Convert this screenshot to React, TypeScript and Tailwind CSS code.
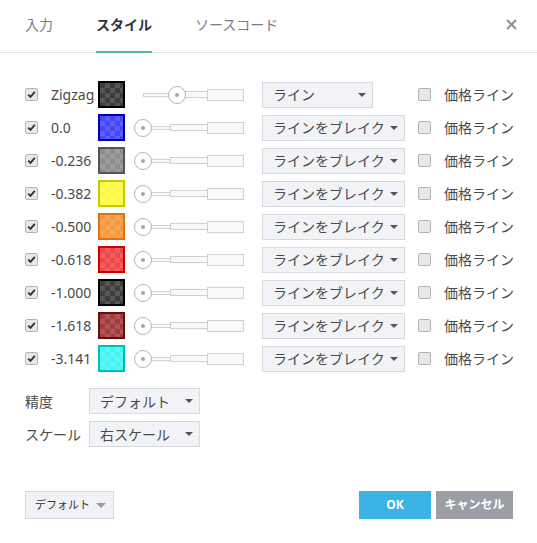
import React from "react";

type Level = {
  label: string;
  fill: string;
  border: string;
  style: string;
  wide: boolean;
  thumb: string;
};

const levels: Level[] = [
  { label: "Zigzag", fill: "bg-[#3c3c3c]", border: "border-[#000000]", style: "ライン", wide: false, thumb: "left-[34px]" },
  { label: "0.0", fill: "bg-[#4646fa]", border: "border-[#0000a8]", style: "ラインをブレイク", wide: true, thumb: "left-0" },
  { label: "-0.236", fill: "bg-[#8e8e8e]", border: "border-[#555555]", style: "ラインをブレイク", wide: true, thumb: "left-0" },
  { label: "-0.382", fill: "bg-[#fafa46]", border: "border-[#c8c800]", style: "ラインをブレイク", wide: true, thumb: "left-0" },
  { label: "-0.500", fill: "bg-[#f8983e]", border: "border-[#e07010]", style: "ラインをブレイク", wide: true, thumb: "left-0" },
  { label: "-0.618", fill: "bg-[#f04646]", border: "border-[#d00000]", style: "ラインをブレイク", wide: true, thumb: "left-0" },
  { label: "-1.000", fill: "bg-[#3e3e3e]", border: "border-[#000000]", style: "ラインをブレイク", wide: true, thumb: "left-0" },
  { label: "-1.618", fill: "bg-[#a03c3c]", border: "border-[#601010]", style: "ラインをブレイク", wide: true, thumb: "left-0" },
  { label: "-3.141", fill: "bg-[#46f4f4]", border: "border-[#00bcbc]", style: "ラインをブレイク", wide: true, thumb: "left-0" },
];

export default function App() {
  return (
    <div className="h-[543px] w-[537px] bg-white font-['Noto_Sans','Noto_Sans_CJK_JP',sans-serif] text-[#4a4a4a]">
      {/* Tabs */}
      <header className="flex h-[53px] items-stretch border-b border-[#e0e3e8] pl-[25px] pr-[20px]">
        <nav className="-mb-px flex gap-[43px]">
          <Tab label="入力" />
          <Tab label="スタイル" active />
          <Tab label="ソースコード" />
        </nav>
        <button className="ml-auto flex items-center text-[#8f939b]">
          <svg width="11" height="11" viewBox="0 0 11 11" className="-mt-[4px]">
            <path d="M1 1 L10 10 M10 1 L1 10" stroke="currentColor" strokeWidth="2" />
          </svg>
        </button>
      </header>

      {/* Levels */}
      <div className="pl-[25px] pt-[25px]">
        {levels.map((l) => (
          <LevelRow key={l.label} level={l} />
        ))}

        <div className="mt-[13px] flex items-center">
          <span className="w-[64px] whitespace-nowrap text-[14px]">精度</span>
          <Select label="デフォルト" className="w-[111px]" />
        </div>
        <div className="mt-[7px] flex items-center">
          <span className="w-[64px] whitespace-nowrap text-[14px]">スケール</span>
          <Select label="右スケール" className="w-[111px]" />
        </div>
      </div>

      {/* Footer */}
      <footer className="mt-[44px] flex items-center justify-between pl-[25px] pr-[24px]">
        <button className="flex h-[28px] w-[89px] items-center justify-between whitespace-nowrap border border-[#d4d7dc] bg-[#f1f2f6] pl-[9px] pr-[7px] text-[11px] text-[#333]">
          デフォルト
          <span className="h-0 w-0 border-x-[5px] border-t-[5px] border-x-transparent border-t-[#9a9a9a]" />
        </button>
        <div className="flex gap-[5px]">
          <button className="h-[28px] w-[72px] bg-[#3bb3e4] text-[12px] font-bold text-white">OK</button>
          <button className="h-[28px] w-[77px] whitespace-nowrap bg-[#9c9ea5] text-[12px] font-bold text-white">キャンセル</button>
        </div>
      </footer>
    </div>
  );
}

function Tab({ label, active }: { label: string; active?: boolean }) {
  return (
    <div
      className={
        active
          ? "flex items-center whitespace-nowrap border-b-2 border-[#53b987] pb-[3px] text-[14px] font-bold text-[#2f3241]"
          : "flex items-center whitespace-nowrap border-b-2 border-transparent pb-[3px] text-[14px] text-[#787b84]"
      }
    >
      {label}
    </div>
  );
}

function Check({ on }: { on?: boolean }) {
  return (
    <span className="flex h-[13px] w-[13px] shrink-0 items-center justify-center rounded-[2px] border border-[#b4b4b4] bg-[#e8e8e8]">
      {on && (
        <svg width="9" height="9" viewBox="0 0 9 9">
          <path d="M1.2 4.6 L3.5 6.9 L7.8 1.8" fill="none" stroke="#333" strokeWidth="1.9" />
        </svg>
      )}
    </span>
  );
}

function Slider({ thumb }: { thumb: string }) {
  return (
    <div className="relative ml-[9px] h-[20px] w-[110px] shrink-0">
      <div className="absolute inset-0 flex items-center pl-[9px]">
        <div className="h-[4px] w-[28px] border border-[#d0d0d0] bg-[#f9f9f9]" />
        <div className="-ml-px h-[7px] w-[38px] border border-[#d0d0d0] bg-[#f9f9f9]" />
        <div className="-ml-px h-[12px] w-[37px] border border-[#d0d0d0] bg-[#f9f9f9]" />
      </div>
      <div className={`absolute top-[1px] ${thumb} flex h-[18px] w-[18px] items-center justify-center rounded-full border border-[#b2b5bc] bg-white`}>
        <div className="h-[4px] w-[4px] rounded-full bg-[#a3a7ae]" />
      </div>
    </div>
  );
}

function Select({ label, className }: { label: string; className: string }) {
  return (
    <div className={`flex h-[26px] items-center justify-between whitespace-nowrap border border-[#d6d9de] bg-[#f1f3f7] pl-[10px] pr-[6px] text-[14px] ${className}`}>
      <span>{label}</span>
      <span className="h-0 w-0 border-x-[4px] border-t-[4px] border-x-transparent border-t-[#555]" />
    </div>
  );
}

function LevelRow({ level }: { level: Level }) {
  return (
    <div className="flex h-[33px] items-center">
      <Check on />
      <span className="ml-[13px] w-[47px] shrink-0 whitespace-nowrap text-[14px]">{level.label}</span>
      <div className={`relative h-[27px] w-[27px] shrink-0 border-2 ${level.border} ${level.fill}`}>
        <div className="absolute inset-0 bg-[conic-gradient(rgba(255,255,255,0.13)_90deg,transparent_90deg_180deg,rgba(255,255,255,0.13)_180deg_270deg,transparent_270deg)] bg-[length:10px_10px]" />
      </div>
      <Slider thumb={level.thumb} />
      <div className="ml-[18px] w-[156px] shrink-0">
        <Select label={level.style} className={level.wide ? "w-[143px]" : "w-[111px]"} />
      </div>
      <Check />
      <span className="ml-[13px] whitespace-nowrap text-[14px]">価格ライン</span>
    </div>
  );
}
